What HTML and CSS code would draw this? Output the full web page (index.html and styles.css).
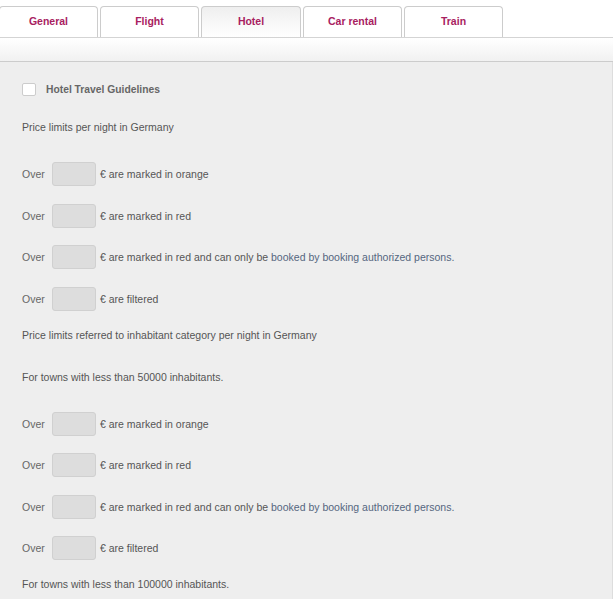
FILE: index.html
```html
<!DOCTYPE html>
<html lang="en">
<head>
    <meta charset="UTF-8">
    <title>Hotel settings</title>
    <link rel="stylesheet" href="styles.css">
</head>
<body>
    <!-- Tabs -->
    <div class="tabs">
        <div class="tab">General</div>
        <div class="tab">Flight</div>
        <div class="tab active">Hotel</div>
        <div class="tab">Car rental</div>
        <div class="tab">Train</div>
    </div>
    <div class="toolbar"></div>

    <div class="panel">
        <label class="check-row"><span class="checkbox"></span> Hotel Travel Guidelines</label>

        <p class="section">Price limits per night in Germany</p>

        <div class="limit-row"><span class="over">Over</span><span class="amount"></span><span>€ are marked in orange</span></div>
        <div class="limit-row"><span class="over">Over</span><span class="amount"></span><span>€ are marked in red</span></div>
        <div class="limit-row"><span class="over">Over</span><span class="amount"></span><span>€ are marked in red and can only be <span class="hint">booked by booking authorized persons.</span></span></div>
        <div class="limit-row"><span class="over">Over</span><span class="amount"></span><span>€ are filtered</span></div>

        <p class="section">Price limits referred to inhabitant category per night in Germany</p>
        <p class="section">For towns with less than 50000 inhabitants.</p>

        <div class="limit-row"><span class="over">Over</span><span class="amount"></span><span>€ are marked in orange</span></div>
        <div class="limit-row"><span class="over">Over</span><span class="amount"></span><span>€ are marked in red</span></div>
        <div class="limit-row"><span class="over">Over</span><span class="amount"></span><span>€ are marked in red and can only be <span class="hint">booked by booking authorized persons.</span></span></div>
        <div class="limit-row"><span class="over">Over</span><span class="amount"></span><span>€ are filtered</span></div>

        <p class="section">For towns with less than 100000 inhabitants.</p>
    </div>
</body>
</html>
```

FILE: styles.css
```css
body {
    margin: 0;
    font-family: "Liberation Sans", Arial, sans-serif;
    font-size: 10.5px;
    color: #555;
    background: #fff;
}
.tabs {
    display: flex;
    gap: 2px;
    padding-top: 6px;
    margin-left: -1px;
}
.tab {
    box-sizing: border-box;
    width: 99px;
    height: 31px;
    line-height: 28px;
    text-align: center;
    font-size: 10.5px;
    font-weight: bold;
    color: #a8215f;
    background: #fff;
    border: 1px solid #ccc;
    border-bottom: none;
    border-radius: 4px 4px 0 0;
}
.tab.active {
    width: 100px;
    background: linear-gradient(#efefef, #fff);
}
.toolbar {
    height: 23px;
    border-top: 1px solid #d4d4d4;
    border-bottom: 1px solid #ccc;
    background: linear-gradient(#fff, #f1f1f1);
}
.panel {
    background: #eee;
    border-right: 1px solid #ddd;
    padding: 20px 22px 10px;
    display: flex;
    flex-direction: column;
    min-height: 520px;
}
.check-row {
    display: flex;
    align-items: center;
    gap: 10px;
    height: 14px;
    font-size: 10.3px;
    font-weight: bold;
    color: #666;
    margin-bottom: 24px;
}
.checkbox {
    box-sizing: border-box;
    width: 14px;
    height: 13px;
    background: #fff;
    border: 1px solid #ccc;
    border-radius: 2px;
}
.section {
    margin: 0;
    height: 14px;
    line-height: 14px;
}
.section + .limit-row,
.section + .section {
    margin-top: 28px;
}
.limit-row {
    display: flex;
    align-items: center;
    height: 24px;
    margin-top: 17.5px;
}
.limit-row + .section {
    margin-top: 17px;
}
.over {
    width: 30px;
    color: #666;
}
.amount {
    box-sizing: border-box;
    width: 44px;
    height: 24px;
    margin-right: 4px;
    background: #ddd;
    border: 1px solid #d0d0d0;
    border-radius: 3px;
}
.hint {
    color: #55667f;
}
```
